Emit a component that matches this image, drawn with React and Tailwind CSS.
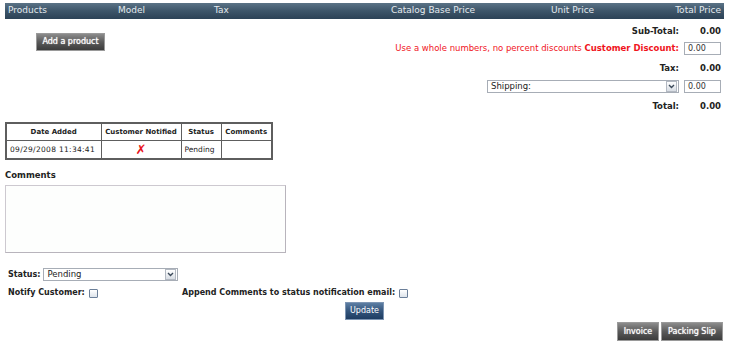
import React from "react";

const btnGray =
  "flex items-center justify-center whitespace-nowrap text-white text-[8px] border border-[#9a9a9a] bg-gradient-to-b from-[#8c8c8c] via-[#5a5a5a] to-[#3c3c3c] [text-shadow:0_0_1px_#fff]";

function Checkbox() {
  return (
    <span className="inline-block w-[9px] h-[9px] border border-[#6b7f99] rounded-[1px] bg-gradient-to-b from-white to-[#dde3ea] ml-[4px]" />
  );
}

function FakeSelect({ value, className }) {
  return (
    <div className={`flex items-center h-[13px] border border-[#a7adb6] bg-white ${className}`}>
      <span className="flex-1 pl-[3px] text-[8.5px] leading-none text-[#222]">{value}</span>
      <span className="w-[11px] h-[11px] mr-[1px] border border-[#b3b9c2] bg-gradient-to-b from-white to-[#d8dde4] flex items-center justify-center">
        <svg width="7" height="5" viewBox="0 0 7 5">
          <path d="M1 1 L3.5 3.5 L6 1" fill="none" stroke="#3c4a5a" strokeWidth="1.4" />
        </svg>
      </span>
    </div>
  );
}

function TotalRow({ label, value, className = "" }) {
  return (
    <div className={`flex justify-end items-center h-[16px] ${className}`}>
      <span className="font-bold text-[8.5px] text-[#222]">{label}</span>
      <span className="w-[42px] text-right font-bold text-[8.5px] text-[#222]">{value}</span>
    </div>
  );
}

export default function App() {
  return (
    <div className="w-[729px] h-[350px] bg-white font-['DejaVu_Sans',sans-serif] pt-[3px] px-[5px] overflow-hidden">
      {/* Products header */}
      <div className="flex items-center h-[16px] bg-gradient-to-b from-[#5b7386] via-[#3d5569] to-[#2c4256] text-[#e4eaee] text-[9px] pr-[3px]">
        <span className="w-[113px] pl-[3px]">Products</span>
        <span className="w-[96px]">Model</span>
        <span className="w-[177px]">Tax</span>
        <span className="w-[160px]">Catalog Base Price</span>
        <span className="flex-1">Unit Price</span>
        <span>Total Price</span>
      </div>

      {/* Add product + totals */}
      <div className="flex justify-between pr-[3px]">
        <div className="pl-[31px] pt-[14px]">
          <div className={`${btnGray} w-[69px] h-[18px]`}>Add a product</div>
        </div>
        <div className="flex flex-col pt-[4px]">
          <TotalRow label="Sub-Total:" value="0.00" />
          <div className="flex justify-end items-center h-[16px] mt-[1px] whitespace-nowrap">
            <span className="text-[8.5px] text-[#f0141c]">Use a whole numbers, no percent discounts&nbsp;</span>
            <span className="font-bold text-[8.5px] text-[#f0141c]">Customer Discount:</span>
            <span className="w-[42px] flex justify-end">
              <span className="w-[37px] h-[13px] border border-[#a7adb6] text-[8px] leading-[11px] pl-[3px] text-[#333]">0.00</span>
            </span>
          </div>
          <TotalRow label="Tax:" value="0.00" className="mt-[4px]" />
          <div className="flex justify-end items-center h-[15px] mt-[3px]">
            <FakeSelect value="Shipping:" className="w-[192px]" />
            <span className="w-[42px] flex justify-end">
              <span className="w-[37px] h-[13px] border border-[#a7adb6] text-[8px] leading-[11px] pl-[3px] text-[#333]">0.00</span>
            </span>
          </div>
          <TotalRow label="Total:" value="0.00" className="mt-[4px]" />
        </div>
      </div>

      {/* Status history */}
      <table className="mt-[8px] table-fixed w-[266px] border-collapse border-2 border-[#5e5e5e] text-[7.5px] text-[#222] whitespace-nowrap">
        <thead>
          <tr className="h-[17px]">
            <th className="w-[95px] border border-[#5e5e5e] font-bold text-[7px] p-0">Date Added</th>
            <th className="w-[80px] border border-[#5e5e5e] font-bold text-[7px] p-0">Customer Notified</th>
            <th className="w-[40px] border border-[#5e5e5e] font-bold text-[7px] p-0">Status</th>
            <th className="w-[51px] border border-[#5e5e5e] font-bold text-[7px] p-0">Comments</th>
          </tr>
        </thead>
        <tbody>
          <tr className="h-[19px]">
            <td className="border border-[#5e5e5e] pl-[3px] tracking-[0.3px]">09/29/2008 11:34:41</td>
            <td className="border border-[#5e5e5e] text-center text-[#e8141c] text-[13px] font-bold leading-none">✗</td>
            <td className="border border-[#5e5e5e] pl-[3px]">Pending</td>
            <td className="border border-[#5e5e5e]"></td>
          </tr>
        </tbody>
      </table>

      <div className="mt-[9px] font-bold text-[8.5px] text-[#222] h-[12px] leading-[12px]">Comments</div>
      <div className="mt-[4px] w-[281px] h-[68px] border border-[#b8b4bc] border-t-[#cdc9d0] border-l-[#cdc9d0] bg-[#fdfefd]" />

      {/* Status controls */}
      <div className="mt-[15px] flex items-center h-[13px] pl-[3px]">
        <span className="font-bold text-[8px] text-[#222] mr-[3px]">Status:</span>
        <FakeSelect value="Pending" className="w-[135px]" />
      </div>
      <div className="mt-[6px] flex items-center h-[12px] pl-[3px] whitespace-nowrap">
        <span className="w-[174px] flex items-center">
          <span className="font-bold text-[8px] text-[#222]">Notify Customer:</span>
          <Checkbox />
        </span>
        <span className="font-bold text-[8px] text-[#222]">Append Comments to status notification email:</span>
        <Checkbox />
      </div>
      <div className="mt-[3px] flex justify-center">
        <div className="flex items-center justify-center w-[39px] h-[18px] text-white text-[8px] border border-[#7d95b3] bg-gradient-to-b from-[#5d7ea3] via-[#34557c] to-[#1f3d62]">Update</div>
      </div>
      <div className="mt-[2px] flex justify-end gap-[2px] pr-[1px]">
        <div className={`${btnGray} w-[42px] h-[19px]`}>Invoice</div>
        <div className={`${btnGray} w-[62px] h-[19px]`}>Packing Slip</div>
      </div>
    </div>
  );
}
